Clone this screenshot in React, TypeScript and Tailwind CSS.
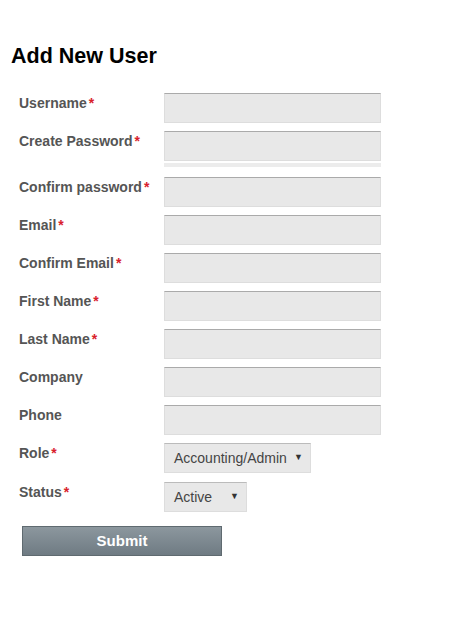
import React from "react";

const font = { fontFamily: '"Liberation Sans", Arial, sans-serif' };

function Label({ text, req }: { text: string; req?: boolean }) {
  return (
    <div className="w-[145px] pt-[2px] text-[14px] font-bold leading-[16px] text-[#555555]">
      {text}
      {req && <span className="ml-[2px] text-[#d9212c]">*</span>}
    </div>
  );
}

function Input() {
  return (
    <div className="h-[30px] w-[217px] border border-[#dddddd] border-t-[#aaaaaa] bg-[#e8e8e8]" />
  );
}

function Row({ text, req, children }: { text: string; req?: boolean; children: React.ReactNode }) {
  return (
    <div className="flex items-start">
      <Label text={text} req={req} />
      {children}
    </div>
  );
}

function Select({ value, width }: { value: string; width: string }) {
  return (
    <div
      className={`flex h-[30px] ${width} items-center justify-between border border-[#dddddd] border-t-[#bbbbbb] bg-[#e8e8e8] pl-[9px] pr-[7px] text-[14px] text-[#444444]`}
    >
      <span>{value}</span>
      <span className="text-[9px] text-[#333333]">▼</span>
    </div>
  );
}

export default function App() {
  return (
    <div className="min-h-[625px] w-[463px] bg-white" style={font}>
      <div className="pl-[11px] pt-[43px]">
        <h1 className="text-[21.5px] font-bold leading-[26px] text-black">Add New User</h1>
      </div>
      <div className="flex flex-col pl-[19px] pt-[24px]">
        <div className="flex flex-col gap-[8px]">
          <Row text="Username" req>
            <Input />
          </Row>
          <Row text="Create Password" req>
            <div className="flex flex-col">
              <Input />
              <div className="mt-[2px] h-[4px] w-[217px] bg-[#ececec]" />
            </div>
          </Row>
        </div>
        <div className="mt-[10px] flex flex-col gap-[8px]">
          <Row text="Confirm password" req>
            <Input />
          </Row>
          <Row text="Email" req>
            <Input />
          </Row>
          <Row text="Confirm Email" req>
            <Input />
          </Row>
          <Row text="First Name" req>
            <Input />
          </Row>
          <Row text="Last Name" req>
            <Input />
          </Row>
          <Row text="Company">
            <Input />
          </Row>
          <Row text="Phone">
            <Input />
          </Row>
          <Row text="Role" req>
            <Select value="Accounting/Admin" width="w-[147px]" />
          </Row>
        </div>
        <div className="mt-[9px]">
          <Row text="Status" req>
            <Select value="Active" width="w-[83px]" />
          </Row>
        </div>
        <div className="mt-[14px] pl-[3px]">
          <button className="flex h-[30px] w-[200px] items-center justify-center border border-[#5f6a70] bg-gradient-to-b from-[#8c979e] to-[#6f7b83] text-[15px] font-bold text-white">
            Submit
          </button>
        </div>
      </div>
    </div>
  );
}
